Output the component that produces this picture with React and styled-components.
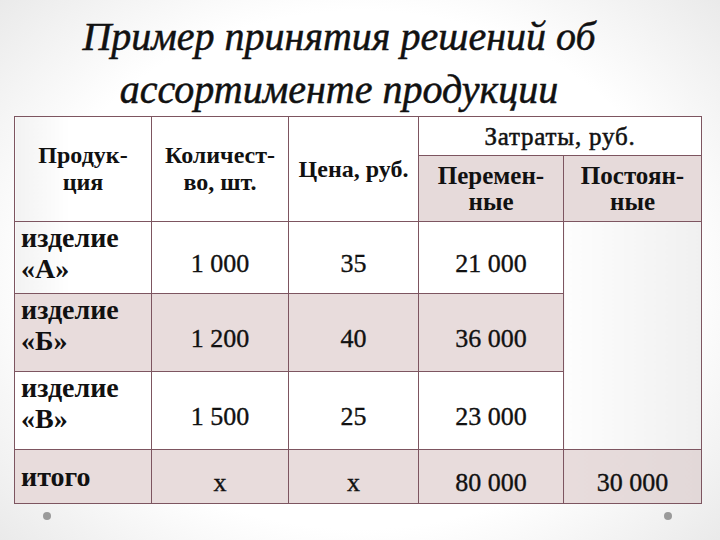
import styled, { createGlobalStyle } from "styled-components";

const GlobalStyle = createGlobalStyle`
  html, body {
    margin: 0;
    padding: 0;
  }
  body {
    font-family: "Liberation Serif", "Times New Roman", serif;
    color: #111;
  }
`;

const Slide = styled.div`
  width: 720px;
  height: 540px;
  overflow: hidden;
  display: flex;
  flex-direction: column;
  font-family: "Liberation Serif", serif;
  background: radial-gradient(ellipse 75% 80% at 50% 50%, #ffffff 60%, #e4e4e4 100%);
`;

const Title = styled.h1`
  margin: 10px 0 0;
  padding: 0 56px 0 14px;
  font-family: "Liberation Serif", serif;
  font-style: italic;
  font-weight: normal;
  font-size: 40px;
  line-height: 53px;
  text-align: center;
  color: #111;
  -webkit-text-stroke: 0.5px #111;
`;

const Table = styled.table`
  margin-left: 14px;
  width: 687px;
  border-collapse: collapse;
  table-layout: fixed;
  font-family: "Liberation Serif", serif;
  color: #111;
`;

const Cell = styled.td`
  border: 1px solid #7d5560;
  padding: 0;
  font-family: "Liberation Serif", serif;
  text-align: center;
  vertical-align: middle;
  background: ${(p) => p.$bg || "transparent"};
`;

const HeadCell = styled(Cell)`
  font-size: ${(p) => p.$size || 24}px;
  line-height: ${(p) => p.$lh || 27}px;
  font-weight: ${(p) => (p.$light ? "normal" : "bold")};
  letter-spacing: ${(p) => p.$ls || 0}px;
  -webkit-text-stroke: ${(p) => (p.$light ? "0.5px #111" : "0")};
`;

const LabelCell = styled(Cell)`
  text-align: left;
  vertical-align: ${(p) => (p.$middle ? "middle" : "top")};
  padding: 0 6px;
  font-size: 28px;
  line-height: 31px;
  font-weight: bold;
`;

const NumCell = styled(Cell)`
  padding-top: 12px;
  font-size: 26px;
  line-height: 31px;
  -webkit-text-stroke: 0.35px #111;
`;

const Row = styled.tr`
  height: ${(p) => p.$h}px;
`;

const Bullets = styled.div`
  display: flex;
  justify-content: space-between;
  padding: 8px 48px 0 43px;
`;

const Dot = styled.span`
  width: 8px;
  height: 8px;
  border-radius: 50%;
  background: #9a9a9a;
`;

const PINK = "#e8dcdc";
const HEAD_BG = "linear-gradient(90deg, #f2f2f2 0%, #ffffff 40%)";

const rows = [
  { name: "изделие «А»", qty: "1 000", price: "35", variable: "21 000", bg: "#ffffff", h: 72 },
  { name: "изделие «Б»", qty: "1 200", price: "40", variable: "36 000", bg: PINK, h: 78 },
  { name: "изделие «В»", qty: "1 500", price: "25", variable: "23 000", bg: "#ffffff", h: 78 },
];

export default function App() {
  return (
    <Slide>
      <GlobalStyle />
      <Title>
        Пример принятия решений об
        <br />
        ассортименте продукции
      </Title>
      <Table>
        <colgroup>
          <col style={{ width: 137 }} />
          <col style={{ width: 137 }} />
          <col style={{ width: 130 }} />
          <col style={{ width: 145 }} />
          <col style={{ width: 138 }} />
        </colgroup>
        <tbody>
          <Row $h={39}>
            <HeadCell rowSpan={2} $bg={HEAD_BG}>
              Продук-
              <br />
              ция
            </HeadCell>
            <HeadCell rowSpan={2} $bg="#ffffff">
              Количест-
              <br />
              во, шт.
            </HeadCell>
            <HeadCell rowSpan={2} $bg="#ffffff">
              Цена, руб.
            </HeadCell>
            <HeadCell colSpan={2} $light $size={25} $ls={0.8} $bg="#ffffff">
              Затраты, руб.
            </HeadCell>
          </Row>
          <Row $h={66}>
            <HeadCell $size={25} $lh={26} $bg="#e6dada">
              Перемен-
              <br />
              ные
            </HeadCell>
            <HeadCell $size={25} $lh={26} $bg="#e6dada">
              Постоян-
              <br />
              ные
            </HeadCell>
          </Row>
          {rows.map((r, i) => (
            <Row key={r.name} $h={r.h}>
              <LabelCell $bg={i === 0 ? HEAD_BG : r.bg}>
                {r.name.split(" ")[0]}
                <br />
                {r.name.split(" ")[1]}
              </LabelCell>
              <NumCell $bg={r.bg}>{r.qty}</NumCell>
              <NumCell $bg={r.bg}>{r.price}</NumCell>
              <NumCell $bg={r.bg}>{r.variable}</NumCell>
              {i === 0 && (
                <Cell
                  rowSpan={3}
                  $bg="linear-gradient(90deg, #fdfdfd 0%, #f0f0f0 100%)"
                />
              )}
            </Row>
          ))}
          <Row $h={54}>
            <LabelCell $middle $bg={PINK}>
              итого
            </LabelCell>
            <NumCell $bg={PINK}>х</NumCell>
            <NumCell $bg={PINK}>х</NumCell>
            <NumCell $bg={PINK}>80 000</NumCell>
            <NumCell $bg="linear-gradient(90deg, #e8dcdc 0%, #e2d8d8 100%)">
              30 000
            </NumCell>
          </Row>
        </tbody>
      </Table>
      <Bullets>
        <Dot />
        <Dot />
      </Bullets>
    </Slide>
  );
}
